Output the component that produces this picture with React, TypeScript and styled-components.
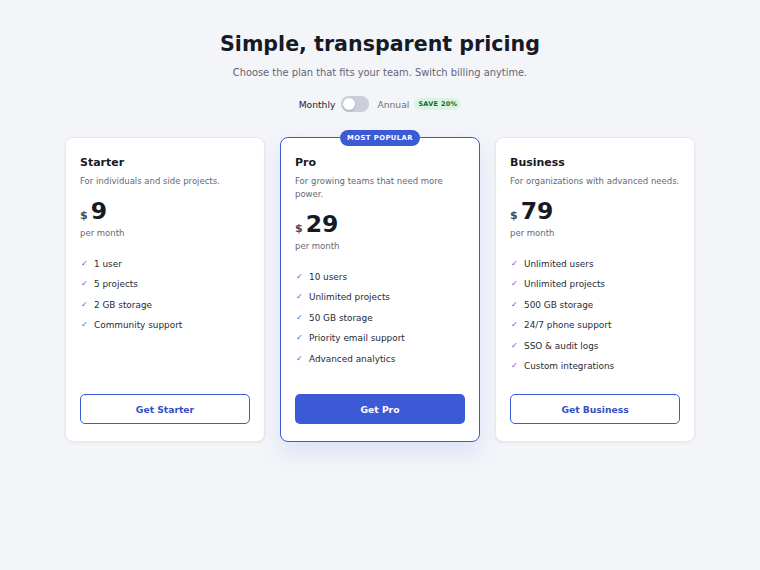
import styled, { createGlobalStyle } from 'styled-components';

const GlobalStyle = createGlobalStyle`
	html, body {
		margin: 0;
		padding: 0;
		background: #f4f5f9;
		font-family: 'DejaVu Sans', 'Liberation Sans', sans-serif;
		color: #141824;
	}
`;

const Page = styled.div`
	min-height: 570px;
	padding-top: 30px;
	display: flex;
	flex-direction: column;
	align-items: center;
	box-sizing: border-box;
`;

const Title = styled.h1`
	margin: 0;
	font-size: 20.6px;
	line-height: 28px;
	font-weight: 700;
	color: #161a26;
`;

const Subtitle = styled.p`
	margin: 7px 0 0;
	font-size: 9.9px;
	line-height: 16px;
	color: #5f6576;
`;

const BillingRow = styled.div`
	margin-top: 14px;
	height: 18px;
	display: flex;
	align-items: center;
	font-size: 9.2px;
`;

const BillingLabel = styled.span<{ $active?: boolean }>`
	color: ${(p) => (p.$active ? '#1e2230' : '#6b7182')};
`;

const Toggle = styled.div`
	width: 28px;
	height: 16px;
	border-radius: 8px;
	background: #c9ced9;
	display: flex;
	align-items: center;
	padding: 0 2px;
	box-sizing: border-box;
	margin: 0 8px 0 6px;
`;

const Knob = styled.div`
	width: 12px;
	height: 12px;
	border-radius: 50%;
	background: #fff;
	box-shadow: 0 1px 2px rgba(0, 0, 0, 0.2);
`;

const SaveBadge = styled.span`
	margin-left: 5px;
	padding: 2px 4px;
	border-radius: 7px;
	background: #d8f5e2;
	color: #17693a;
	font-size: 6.5px;
	font-weight: 700;
	letter-spacing: 0.3px;
`;

const Plans = styled.div`
	margin-top: 24px;
	display: grid;
	grid-template-columns: repeat(3, 200px);
	gap: 15px;
	align-items: stretch;
`;

const Card = styled.div<{ $featured?: boolean }>`
	position: relative;
	display: flex;
	flex-direction: column;
	padding: 17px 14px 17px;
	background: #fff;
	border-radius: 8px;
	border: ${(p) => (p.$featured ? '1.5px solid #3d5ad6' : '1px solid #e6e8ee')};
	box-shadow: ${(p) =>
		p.$featured
			? '0 10px 24px rgba(60, 90, 214, 0.13)'
			: '0 1px 3px rgba(20, 30, 60, 0.06)'};
`;

const PopularBadge = styled.div`
	position: absolute;
	top: -8px;
	left: 50%;
	transform: translateX(-50%);
	height: 16px;
	padding: 0 7px;
	border-radius: 8px;
	background: #3d5ad6;
	color: #fff;
	font-size: 6.8px;
	font-weight: 700;
	letter-spacing: 0.45px;
	line-height: 16px;
	white-space: nowrap;
`;

const PlanName = styled.h2`
	margin: 0;
	font-size: 11px;
	line-height: 16px;
	font-weight: 700;
	color: #161a26;
`;

const PlanDesc = styled.p`
	margin: 4px 0 0;
	font-size: 8.5px;
	line-height: 13px;
	color: #636979;
`;

const PriceRow = styled.div`
	margin-top: 8px;
	height: 30px;
	display: flex;
	align-items: baseline;
	gap: 3px;
	line-height: 30px;
`;

const Currency = styled.span`
	font-size: 11px;
	font-weight: 600;
	color: #454b5c;
`;

const Amount = styled.span`
	font-size: 23.5px;
	font-weight: 700;
	color: #161a26;
`;

const Period = styled.div`
	font-size: 8.5px;
	line-height: 14px;
	color: #636979;
`;

const Features = styled.ul`
	list-style: none;
	margin: 16.5px 0 0;
	padding: 0;
	display: flex;
	flex-direction: column;
	gap: 6.6px;
`;

const Feature = styled.li`
	display: flex;
	align-items: center;
	height: 14px;
	font-size: 8.9px;
	line-height: 14px;
	color: #262a36;
`;

const Check = styled.span`
	width: 14px;
	font-size: 8px;
	font-weight: 700;
	color: #3d5ad6;
	padding-left: 1px;
	box-sizing: border-box;
`;

const PlanButton = styled.button<{ $primary?: boolean }>`
	height: 30px;
	width: 100%;
	border-radius: 5px;
	font-family: inherit;
	font-size: 9.2px;
	font-weight: 700;
	cursor: pointer;
	border: ${(p) => (p.$primary ? 'none' : '1.5px solid #3d5ad6')};
	background: ${(p) => (p.$primary ? '#3d5ad6' : '#fff')};
	color: ${(p) => (p.$primary ? '#fff' : '#3650c4')};
`;

const ButtonSpacer = styled.div`
	flex: 1;
	min-height: 21px;
`;

const plans = [
	{
		name: 'Starter',
		desc: 'For individuals and side projects.',
		price: 9,
		features: ['1 user', '5 projects', '2 GB storage', 'Community support'],
		cta: 'Get Starter',
	},
	{
		name: 'Pro',
		desc: 'For growing teams that need more power.',
		price: 29,
		features: [
			'10 users',
			'Unlimited projects',
			'50 GB storage',
			'Priority email support',
			'Advanced analytics',
		],
		cta: 'Get Pro',
		featured: true,
	},
	{
		name: 'Business',
		desc: 'For organizations with advanced needs.',
		price: 79,
		features: [
			'Unlimited users',
			'Unlimited projects',
			'500 GB storage',
			'24/7 phone support',
			'SSO & audit logs',
			'Custom integrations',
		],
		cta: 'Get Business',
	},
];

export default function App() {
	return (
		<>
			<GlobalStyle />
			<Page>
				<Title>Simple, transparent pricing</Title>
				<Subtitle>Choose the plan that fits your team. Switch billing anytime.</Subtitle>
				<BillingRow>
					<BillingLabel $active>Monthly</BillingLabel>
					<Toggle>
						<Knob />
					</Toggle>
					<BillingLabel>Annual</BillingLabel>
					<SaveBadge>SAVE 20%</SaveBadge>
				</BillingRow>
				<Plans>
					{plans.map((plan) => (
						<Card key={plan.name} $featured={plan.featured}>
							{plan.featured && <PopularBadge>MOST POPULAR</PopularBadge>}
							<PlanName>{plan.name}</PlanName>
							<PlanDesc>{plan.desc}</PlanDesc>
							<PriceRow>
								<Currency>$</Currency>
								<Amount>{plan.price}</Amount>
							</PriceRow>
							<Period>per month</Period>
							<Features>
								{plan.features.map((f) => (
									<Feature key={f}>
										<Check>✓</Check>
										{f}
									</Feature>
								))}
							</Features>
							<ButtonSpacer />
							<PlanButton $primary={plan.featured}>{plan.cta}</PlanButton>
						</Card>
					))}
				</Plans>
			</Page>
		</>
	);
}
